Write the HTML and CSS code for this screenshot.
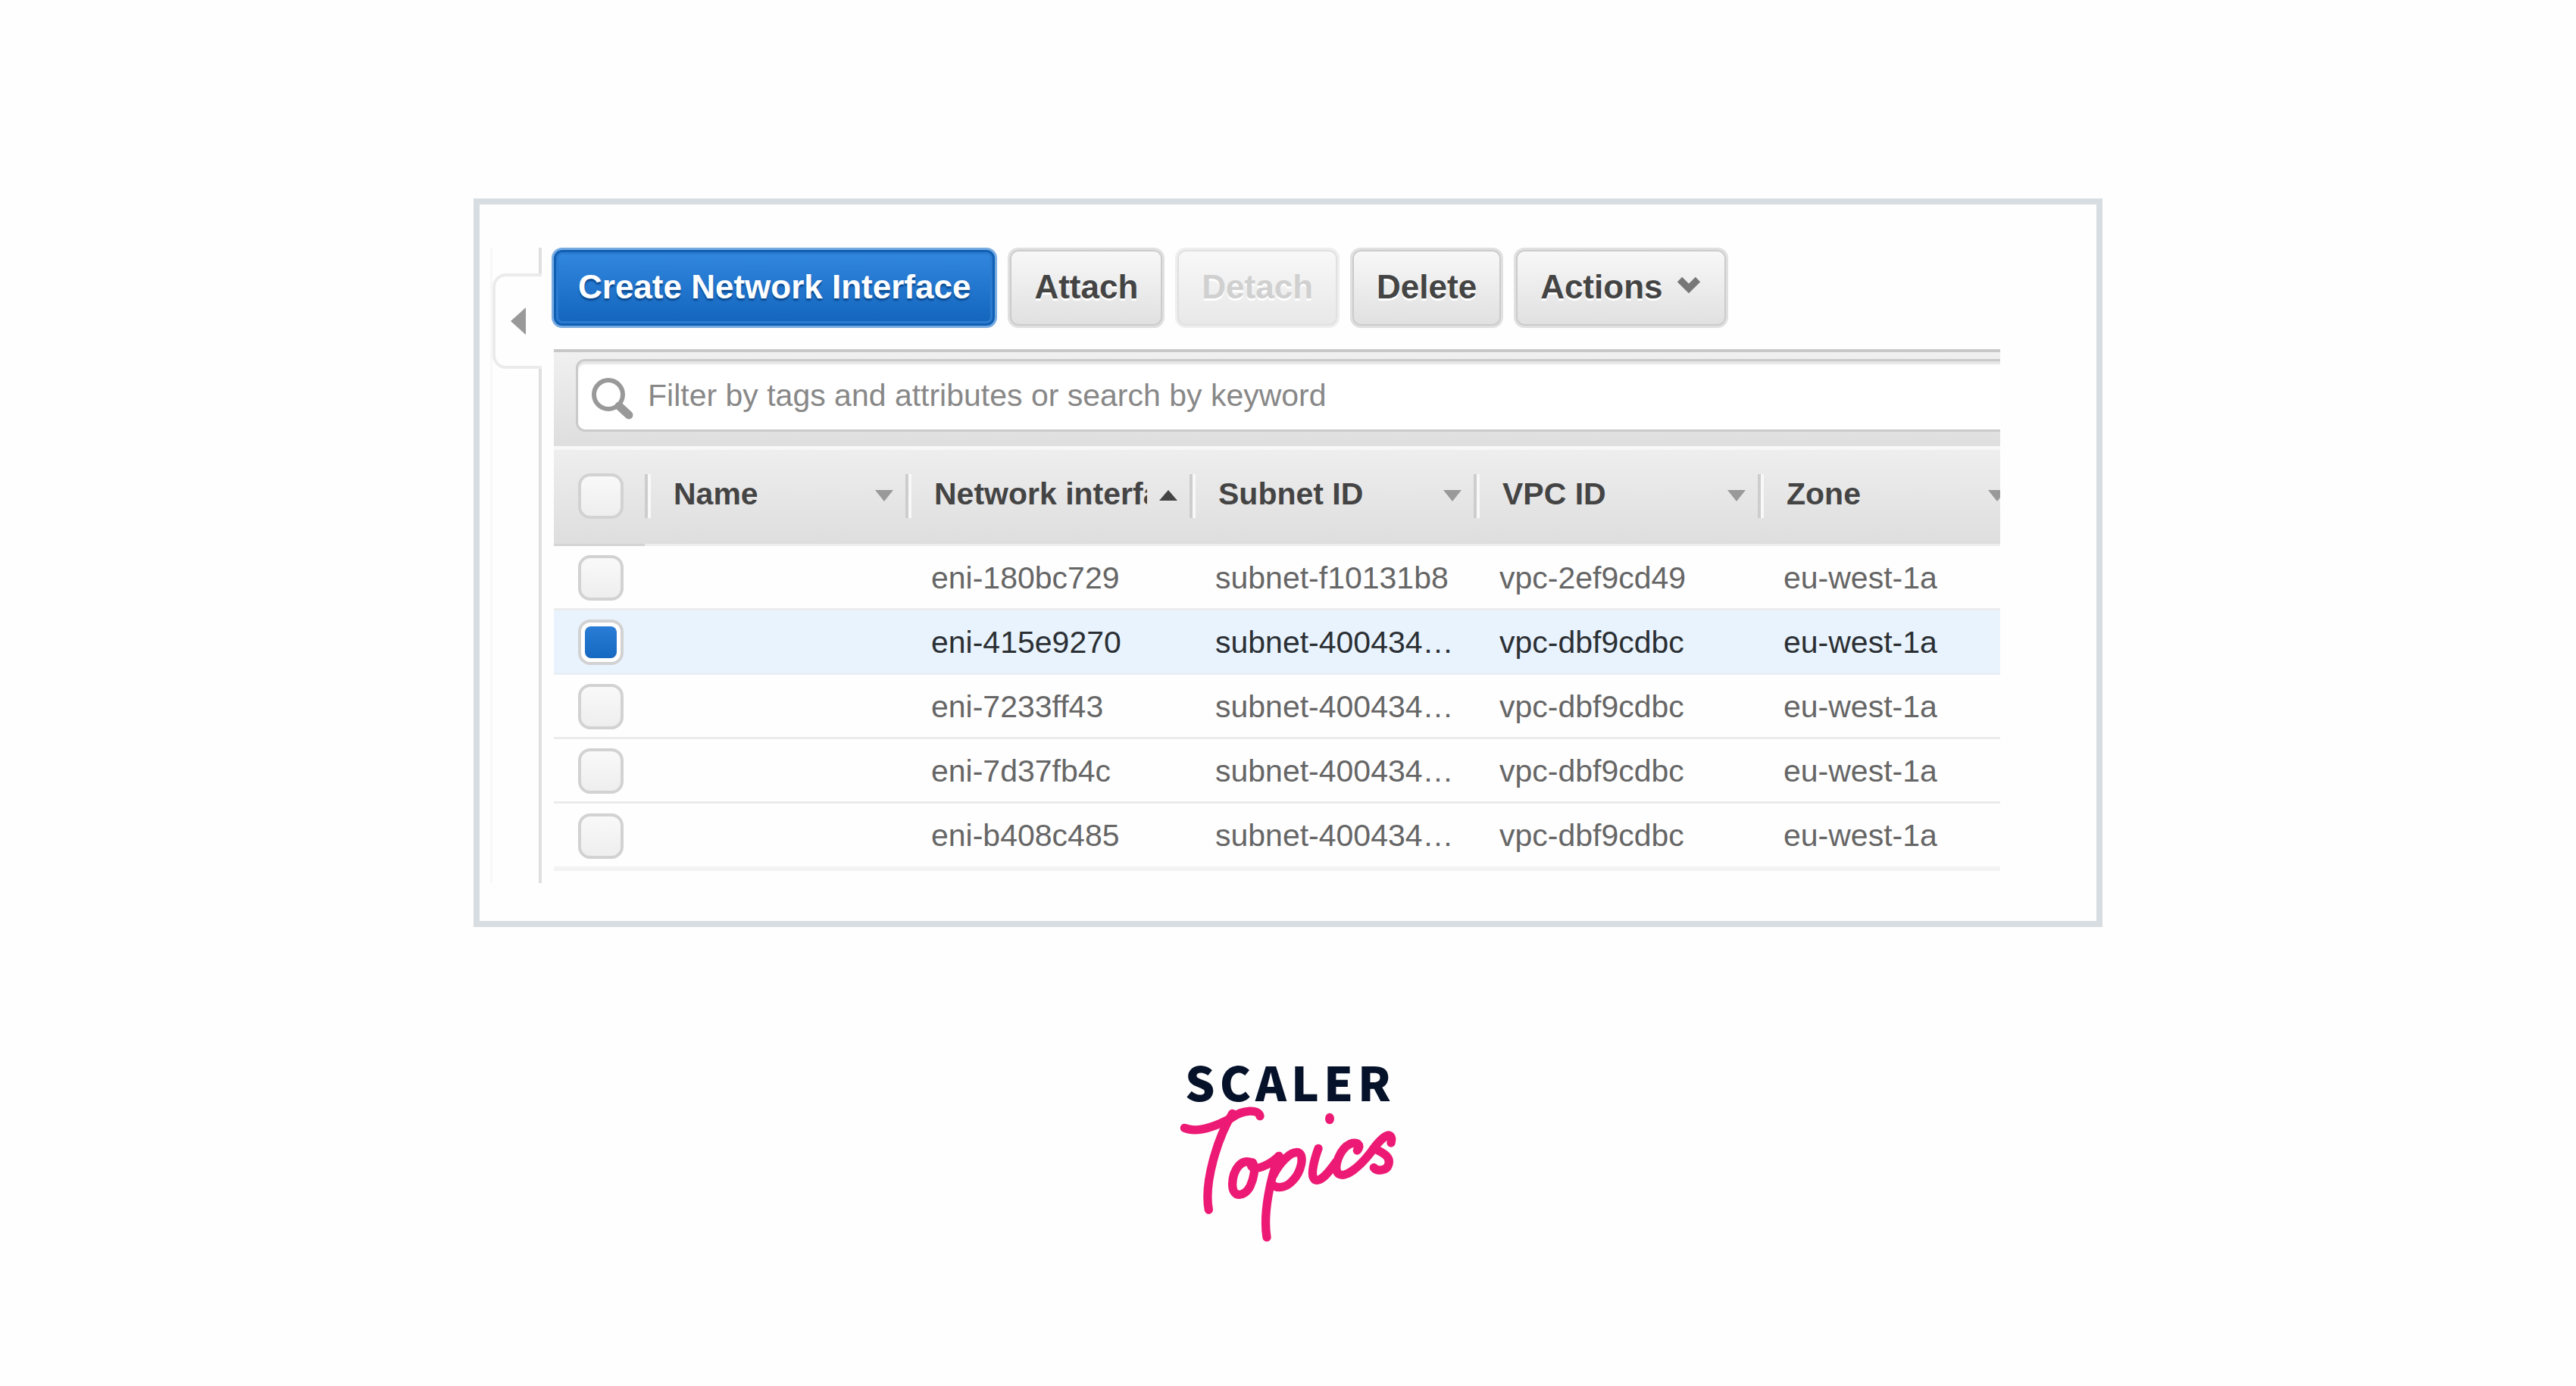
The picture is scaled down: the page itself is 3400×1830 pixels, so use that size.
FILE: index.html
```html
<!DOCTYPE html>
<html lang="en">
<head>
<meta charset="utf-8">
<title>Network Interfaces</title>
<link rel="stylesheet" href="styles.css">
</head>
<body>
<main class="page">
  <section class="frame">
    <aside class="rail">
      <div class="rail-line rail-line-top"></div>
      <button class="rail-tab" type="button" aria-label="Collapse navigation">
        <svg width="20" height="36" viewBox="0 0 20 36"><path d="M20 0v36L0 18z" fill="#999"/></svg>
      </button>
      <div class="rail-line rail-line-rest"></div>
    </aside>
    <div class="console">
      <div class="toolbar">
        <button class="btn btn-primary" type="button">Create Network Interface</button>
        <button class="btn" type="button">Attach</button>
        <button class="btn" type="button" disabled>Detach</button>
        <button class="btn" type="button">Delete</button>
        <button class="btn" type="button">Actions
          <svg width="34" height="28" viewBox="0 0 34 28"><path d="M5 4l12 12L29 4" fill="none" stroke="#777" stroke-width="9"/></svg>
        </button>
      </div>
      <div class="panel">
        <div class="filter">
          <label class="search">
            <svg class="search-icon" width="56" height="56" viewBox="0 0 56 56" fill="none" stroke="#999"><circle cx="23" cy="22" r="19" stroke-width="6"/><path d="M37 37l13 12" stroke-width="11" stroke-linecap="round"/></svg>
            <input class="search-input" type="text" aria-label="Filter" placeholder="Filter by tags and attributes or search by keyword">
          </label>
        </div>
        <table class="grid">
          <colgroup><col class="col-check"><col class="col-name"><col class="col-data"><col class="col-data"><col class="col-data"><col></colgroup>
          <thead>
            <tr>
              <th class="cell-check"><input class="tick" type="checkbox" aria-label="Select all"></th>
              <th><button class="sort" type="button"><span class="sort-label">Name</span><svg class="arrow" width="24" height="15" viewBox="0 0 24 15"><path d="M0 0h24L12 15z"/></svg></button></th>
              <th><button class="sort sort-active" type="button"><span class="sort-label">Network interface</span><svg class="arrow" width="24" height="15" viewBox="0 0 24 15"><path d="M0 14h24L12 0z"/></svg></button></th>
              <th><button class="sort" type="button"><span class="sort-label">Subnet ID</span><svg class="arrow" width="24" height="15" viewBox="0 0 24 15"><path d="M0 0h24L12 15z"/></svg></button></th>
              <th><button class="sort" type="button"><span class="sort-label">VPC ID</span><svg class="arrow" width="24" height="15" viewBox="0 0 24 15"><path d="M0 0h24L12 15z"/></svg></button></th>
              <th><button class="sort" type="button"><span class="sort-label">Zone</span><svg class="arrow" width="24" height="15" viewBox="0 0 24 15"><path d="M0 0h24L12 15z"/></svg></button></th>
            </tr>
          </thead>
          <tbody>
            <tr><td class="cell-check"><input class="tick" type="checkbox" aria-label="Select eni-180bc729"></td><td></td><td>eni-180bc729</td><td>subnet-f10131b8</td><td>vpc-2ef9cd49</td><td>eu-west-1a</td></tr>
            <tr class="selected"><td class="cell-check"><input class="tick" type="checkbox" checked aria-label="Select eni-415e9270"></td><td></td><td>eni-415e9270</td><td>subnet-400434…</td><td>vpc-dbf9cdbc</td><td>eu-west-1a</td></tr>
            <tr><td class="cell-check"><input class="tick" type="checkbox" aria-label="Select eni-7233ff43"></td><td></td><td>eni-7233ff43</td><td>subnet-400434…</td><td>vpc-dbf9cdbc</td><td>eu-west-1a</td></tr>
            <tr><td class="cell-check"><input class="tick" type="checkbox" aria-label="Select eni-7d37fb4c"></td><td></td><td>eni-7d37fb4c</td><td>subnet-400434…</td><td>vpc-dbf9cdbc</td><td>eu-west-1a</td></tr>
            <tr><td class="cell-check"><input class="tick" type="checkbox" aria-label="Select eni-b408c485"></td><td></td><td>eni-b408c485</td><td>subnet-400434…</td><td>vpc-dbf9cdbc</td><td>eu-west-1a</td></tr>
          </tbody>
        </table>
      </div>
    </div>
  </section>
  <footer class="brand">
    <span class="brand-name">SCALER</span>
    <svg class="brand-script" role="img" aria-label="Topics" width="300" height="190" viewBox="90 225 900 570" fill="none" stroke="#ec1a74" stroke-width="34" stroke-linecap="round" stroke-linejoin="round">
      <path d="M130 325C175 344 240 326 318 284C360 254 424 248 429 278"/>
      <path d="M320 268C262 362 206 540 226 649"/>
      <path d="M400 464C356 440 322 492 320 545C318 602 366 602 390 556C406 522 412 484 400 462C384 480 406 490 434 480C464 470 488 452 504 436"/>
      <path d="M504 436C472 520 440 660 456 758"/>
      <path d="M482 512C504 468 548 416 580 422C608 432 592 500 558 534C534 560 504 566 484 554"/>
      <path d="M660 406C640 462 624 530 654 532C684 530 714 480 732 458"/>
      <path d="M814 414C832 394 816 378 786 388C744 408 716 486 740 506C766 526 822 480 866 424C896 380 930 346 944 356C954 364 950 372 948 384"/>
      <path d="M890 410C916 424 948 438 938 470C930 498 890 496 880 482"/>
      <ellipse cx="705" cy="288" rx="18" ry="22" fill="#ec1a74" stroke="none"/>
    </svg>
  </footer>
</main>
</body>
</html>
```
FILE: styles.css
```css
* { box-sizing: border-box; }

body {
  margin: 0;
  background: #fefefe;
  color: #666;
  font-family: "Liberation Sans", Arial, sans-serif;
  font-size: 41px;
}

button, input { font: inherit; margin: 0; }

.page {
  display: flex;
  flex-direction: column;
  align-items: center;
  padding: 262px 40px 40px;
}

.frame {
  display: flex;
  width: 100%;
  max-width: 2150px;
  padding: 57px 127px 50px 14px;
  border: 8px solid #d7dde1;
}

/* Collapsed navigation rail */
.rail {
  display: flex;
  flex-direction: column;
  flex: none;
  width: 68px;
  border-left: 3px solid #f8f8f8;
}

.rail-line { border-right: 4px solid #dfdfdf; }
.rail-line-top { height: 34px; }
.rail-line-rest { flex: 1; }

.rail-tab {
  display: flex;
  align-items: center;
  justify-content: flex-end;
  height: 126px;
  padding: 0 21px 0 0;
  border: 4px solid #ebebeb;
  border-right: 0;
  border-radius: 18px 0 0 18px;
  background: none;
}

.console {
  flex: 1;
  min-width: 0;
  margin-left: 13px;
  padding-bottom: 16px;
}

.toolbar {
  display: flex;
  gap: 14px;
}

.btn {
  display: flex;
  align-items: center;
  gap: 18px;
  height: 106px;
  padding: 0 32px 2px;
  border: 3px solid #e0e0e0;
  border-radius: 14px;
  background: linear-gradient(#f8f8f8, #e0e0e0);
  box-shadow: inset 0 0 0 2px #cbcbcb;
  color: #444;
  font-size: 44px;
  font-weight: bold;
  text-shadow: 0 3px 0 #fff;
  white-space: nowrap;
}

.btn:disabled {
  border-color: #eee;
  box-shadow: inset 0 0 0 2px #e0e0e0;
  background: linear-gradient(#f8f8f8, #e8e8e8);
  color: #d0d0d0;
}

.btn-primary {
  border-color: #77abe0;
  background: linear-gradient(#3388e0, #1264bb);
  box-shadow: inset 0 0 0 3px #0f5fb4, inset 0 0 0 6px #2b7bd0;
  color: #fff;
  text-shadow: 0 3px 2px #0c4a90;
}

.panel {
  margin: 28px 0 0 3px;
  overflow: hidden;
}

.filter {
  height: 128px;
  padding: 9px 0 0 29px;
  border-top: 4px solid #c8c8c8;
  background: linear-gradient(#f0f0f0, #dedede);
}

/* The search box runs on past the clipped right edge of the panel */
.search {
  display: flex;
  align-items: center;
  gap: 19px;
  width: calc(100% + 24px);
  height: 96px;
  padding: 0 0 0 17px;
  border: 3px solid #cacaca;
  border-radius: 12px;
  background: #fff;
  box-shadow: inset 0 4px 2px #e6e6e6;
}

.search-icon { flex: none; margin-top: 10px; }

.search-input {
  flex: 1;
  padding: 0;
  border: 0;
  outline: 0;
  background: none;
}

.search-input::placeholder { color: #888; opacity: 1; }

.grid {
  width: calc(100% + 24px);
  border-collapse: separate;
  border-spacing: 0;
  table-layout: fixed;
}

.col-check { width: 120px; }
.col-name { width: 344px; }
.col-data { width: 375px; }

th {
  height: 132px;
  padding: 0 0 3px;
  border-top: 5px solid #f8f8f8;
  border-bottom: 3px solid #ededed;
  background: linear-gradient(#eee, #dedede);
}

th.cell-check { border-bottom-color: #d4d4d4; }

.sort {
  display: flex;
  align-items: center;
  gap: 16px;
  width: 100%;
  height: 58px;
  padding: 0 16px 0 34px;
  border: 0;
  border-left: 4px solid #cdcdcd;
  background: none;
  box-shadow: inset 4px 0 #f8f8f8;
  color: #444;
  font-weight: bold;
  text-align: left;
}

.sort-label {
  flex: 1;
  padding-bottom: 4px;
  overflow: hidden;
  white-space: nowrap;
}

.arrow { flex: none; fill: #999; }
.sort-active .arrow { fill: #444; }

td {
  height: 85px;
  padding: 2px 0 0 34px;
  border-bottom: 3px solid #ebebeb;
  white-space: nowrap;
}

tbody tr:last-child td { height: 89px; border-bottom: 6px solid #f3f3f3; }

.selected td {
  background: #e8f3fe;
  border-bottom-color: #e9edf6;
  color: #2b2f33;
}

.cell-check {
  padding-left: 32px;
  text-align: left;
}

.tick {
  display: block;
  width: 60px;
  height: 60px;
  border: 4px solid #d2d2d2;
  border-radius: 16px;
  background: linear-gradient(#f9f9f9, #eee);
  appearance: none;
}

.tick:checked {
  padding: 5px;
  background: #fff;
}

.tick:checked::before {
  display: block;
  height: 100%;
  border-radius: 8px;
  background: linear-gradient(#2a7dd6, #1668c0);
  content: "";
}

.brand {
  display: flex;
  flex-direction: column;
  align-items: center;
  padding-top: 174px;
}

.brand-name {
  padding-left: 6px;
  color: #06122a;
  font-family: "Noto Sans CJK JP", "Noto Sans", sans-serif;
  font-size: 62px;
  font-weight: 900;
  letter-spacing: 6px;
  line-height: 58px;
}
```
